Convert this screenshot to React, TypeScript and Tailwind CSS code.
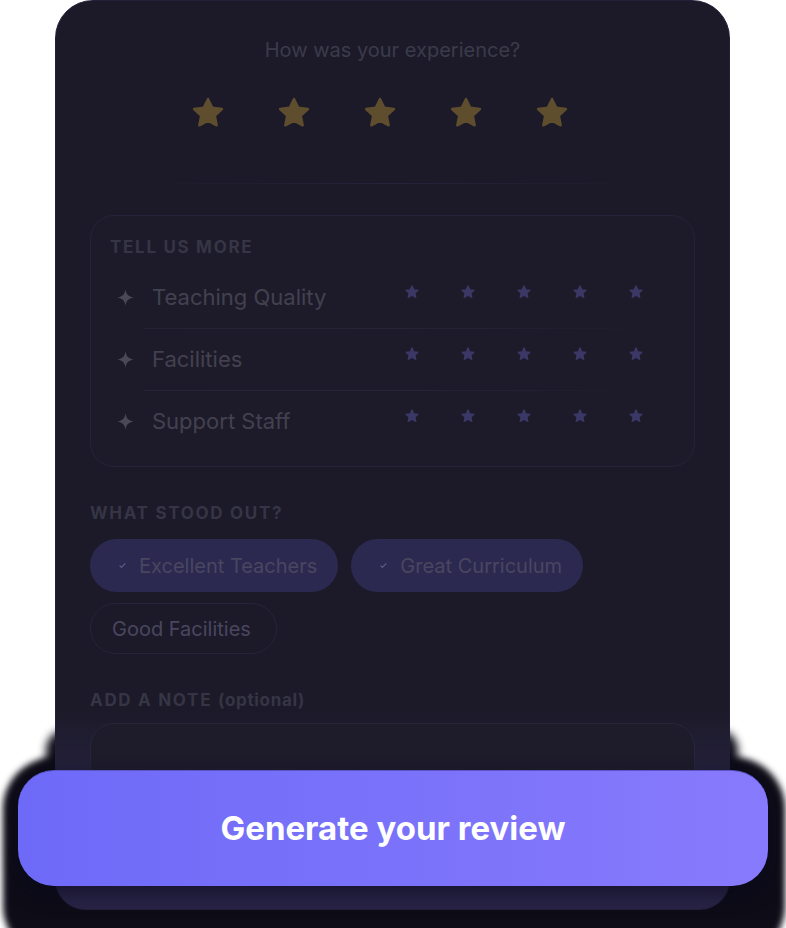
import React from "react";

const font = { fontFamily: "Inter, 'Noto Sans', sans-serif" };

function BigStar() {
  return (
    <svg width="38" height="36" viewBox="0 0 24 24" className="shrink-0">
      <path
        d="M12 2.6l2.85 5.9 6.45.85-4.72 4.48 1.2 6.4L12 17.1l-5.78 3.13 1.2-6.4L2.7 9.35l6.45-.85z"
        fill="#5f4e2e"
        stroke="#5f4e2e"
        strokeWidth="1.6"
        strokeLinejoin="round"
      />
    </svg>
  );
}

function SmallStar() {
  return (
    <svg width="16" height="16" viewBox="0 0 24 24" className="shrink-0">
      <path
        d="M12 2.6l2.85 5.9 6.45.85-4.72 4.48 1.2 6.4L12 17.1l-5.78 3.13 1.2-6.4L2.7 9.35l6.45-.85z"
        fill="#3b3866"
        stroke="#3b3866"
        strokeWidth="1.6"
        strokeLinejoin="round"
      />
    </svg>
  );
}

function Sparkle() {
  return (
    <svg width="19" height="19" viewBox="0 0 24 24" className="shrink-0">
      <path
        d="M12 1.5C13 8 15.5 10.8 22.5 12C15.5 13.2 13 16 12 22.5C11 16 8.5 13.2 1.5 12C8.5 10.8 11 8 12 1.5Z"
        fill="#4a4857"
      />
    </svg>
  );
}

function Check() {
  return (
    <svg width="9" height="9" viewBox="0 0 24 24" className="shrink-0">
      <path d="M5 13l4 4L19 7" fill="none" stroke="#5e5a8c" strokeWidth="3" strokeLinecap="round" strokeLinejoin="round" />
    </svg>
  );
}

function Row({ label, divider }: { label: string; divider: boolean }) {
  return (
    <div className="relative">
      <div className="flex h-[61px] items-center pl-[25px] pr-[50px]">
        <Sparkle />
        <span className="ml-[17px] text-[22px] text-[#434150]">{label}</span>
        <div className="ml-auto flex -translate-y-[6px] gap-[40px]">
          <SmallStar />
          <SmallStar />
          <SmallStar />
          <SmallStar />
          <SmallStar />
        </div>
      </div>
      {divider && (
        <div className="ml-[53px] mr-[30px] h-px bg-gradient-to-r from-[#252335] via-[#262437] to-transparent" />
      )}
    </div>
  );
}

function Chip({ label, active }: { label: string; active: boolean }) {
  return (
    <div
      className={
        active
          ? "flex h-[53px] items-center gap-[12px] rounded-full bg-[#2c2950] pl-[28px] pr-[21px]"
          : "flex h-[51px] items-center rounded-full border border-[#26243a] pl-[21px] pr-[25px]"
      }
    >
      {active && <Check />}
      <span className="text-[20px] text-[#494660]">{label}</span>
    </div>
  );
}

const labelCls = "text-[17px] font-bold leading-[20px] tracking-[0.1em] text-[#363546]";

export default function App() {
  return (
    <div className="relative h-[928px] w-[786px] overflow-hidden bg-white" style={font}>
      {/* dark shadow blob behind the button */}
      <div className="absolute left-[3px] right-[1px] top-[757px] bottom-[-30px] rounded-[52px] bg-[#0d0c17] blur-[3px]" />
      <div className="absolute left-[46px] right-[48px] top-[730px] h-[70px] rounded-[20px] bg-[#0d0c17] blur-[4px]" />

      {/* card */}
      <div className="relative z-10 ml-[55px] flex h-[910px] w-[675px] flex-col rounded-t-[38px] rounded-b-[30px] border border-[#221f3a] bg-[linear-gradient(to_bottom,#1c1a28_0%,#1c1a28_78%,#25223e_86%,#2a2548_100%)] px-[34px] pt-[36px]">
        <div className="text-center text-[20px] leading-[26px] text-[#3b3a4b]">How was your experience?</div>

        <div className="mt-[32px] flex justify-center gap-[48px] pr-[26px]">
          <BigStar />
          <BigStar />
          <BigStar />
          <BigStar />
          <BigStar />
        </div>

        <div className="mx-[40px] mt-[52px] h-px bg-gradient-to-r from-transparent via-[#25233a] to-transparent" />

        <div className="mt-[31px] rounded-[24px] border border-[#25233a] bg-[#1d1b29] pb-[14px] pt-[21px]">
          <div className={"pl-[19px] " + labelCls}>TELL US MORE</div>
          <div className="mt-[10px]">
            <Row label="Teaching Quality" divider />
            <Row label="Facilities" divider />
            <Row label="Support Staff" divider={false} />
          </div>
        </div>

        <div className={"mt-[36px] " + labelCls}>WHAT STOOD OUT?</div>
        <div className="mt-[16px] flex flex-wrap gap-x-[13px] gap-y-[11px]">
          <Chip label="Excellent Teachers" active />
          <Chip label="Great Curriculum" active />
          <Chip label="Good Facilities" active={false} />
        </div>

        <div className={"mt-[36px] " + labelCls}>
          ADD A NOTE <span className="tracking-[0.04em]">(optional)</span>
        </div>
        <div className="mt-[13px] h-[140px] rounded-[24px] border border-[#27253a] bg-[#1e1c2b]" />
      </div>

      {/* overlay button */}
      <button className="absolute left-[18px] top-[770px] z-20 flex h-[116px] w-[750px] items-center justify-center rounded-[36px] border-t border-[#5b55c8] bg-gradient-to-r from-[#6e6af8] via-[#7a72fa] to-[#887afc] shadow-[0_8px_20px_rgba(10,8,30,0.6)]">
        <span className="text-[33px] font-bold text-white">Generate your review</span>
      </button>
    </div>
  );
}
